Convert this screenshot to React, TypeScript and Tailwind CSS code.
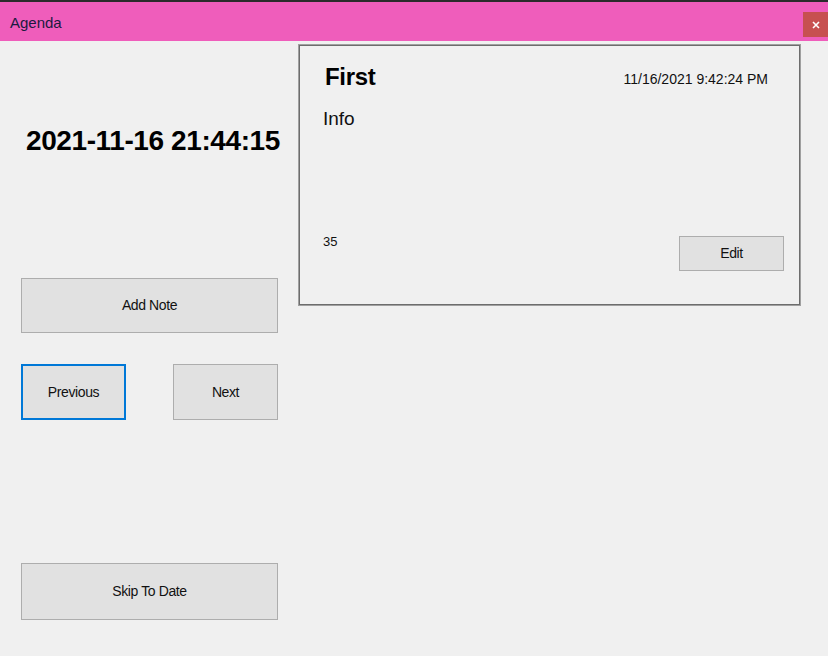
const font = { fontFamily: '"Liberation Sans", Arial, sans-serif' }

function WinButton({ label, className = '' }: { label: string; className?: string }) {
  return (
    <div
      className={`flex items-center justify-center bg-[#e1e1e1] border border-[#adadad] text-[14px] text-[#111] tracking-[-0.4px] ${className}`}
    >
      {label}
    </div>
  )
}

export default function App() {
  return (
    <div className="w-[828px] h-[656px] flex flex-col bg-[#f0f0f0] overflow-hidden" style={font}>
      <div className="h-[2px] bg-[#2b2b2b]" />
      <div className="h-[39px] shrink-0 bg-[#ef5dbb] flex items-start justify-between">
        <span className="pl-[10px] pt-[12px] text-[15px] leading-[18px] text-[#1a1a40]">Agenda</span>
        <div className="mt-[10px] w-[25px] h-[25px] bg-[#c75050] flex items-center justify-center">
          <svg width="8" height="8" viewBox="0 0 8 8">
            <path d="M1 1 L7 7 M7 1 L1 7" stroke="#fff" strokeWidth="1.6" />
          </svg>
        </div>
      </div>
      <div className="flex-1 flex">
        <div className="w-[298px] shrink-0 pl-[21px] pr-[20px] flex flex-col">
          <div className="mt-[84px] pl-[5px] text-[28px] leading-[32px] font-bold text-black whitespace-nowrap tracking-[-0.4px]">
            2021-11-16 21:44:15
          </div>
          <WinButton label="Add Note" className="mt-[121px] h-[55px]" />
          <div className="mt-[31px] flex justify-between">
            <div className="w-[105px] h-[56px] flex items-center justify-center bg-[#e1e1e1] border-2 border-[#0078d7] text-[14px] text-[#111] tracking-[-0.4px]">
              Previous
            </div>
            <WinButton label="Next" className="w-[105px] h-[56px]" />
          </div>
          <WinButton label="Skip To Date" className="mt-[143px] h-[57px]" />
        </div>
        <div className="pt-[3px]">
          <div className="w-[503px] h-[262px] border border-[#a0a0a0] outline outline-1 -outline-offset-2 outline-[#6d6d6d] flex flex-col pl-[24px] pr-[16px]">
            <div className="flex justify-between items-start">
              <span className="pl-[2px] pt-[18px] text-[24px] leading-[28px] font-bold text-black tracking-[-0.3px]">
                First
              </span>
              <span className="pt-[26px] pr-[16px] text-[14px] leading-[16px] text-[#111] tracking-[0px]">
                11/16/2021 9:42:24 PM
              </span>
            </div>
            <span className="mt-[17px] text-[19px] leading-[22px] text-[#111]">Info</span>
            <div className="mt-[104px] flex justify-between items-start">
              <span className="text-[13px] leading-[16px] text-[#111]">35</span>
              <WinButton label="Edit" className="mt-[2px] w-[105px] h-[35px]" />
            </div>
          </div>
        </div>
      </div>
    </div>
  )
}
